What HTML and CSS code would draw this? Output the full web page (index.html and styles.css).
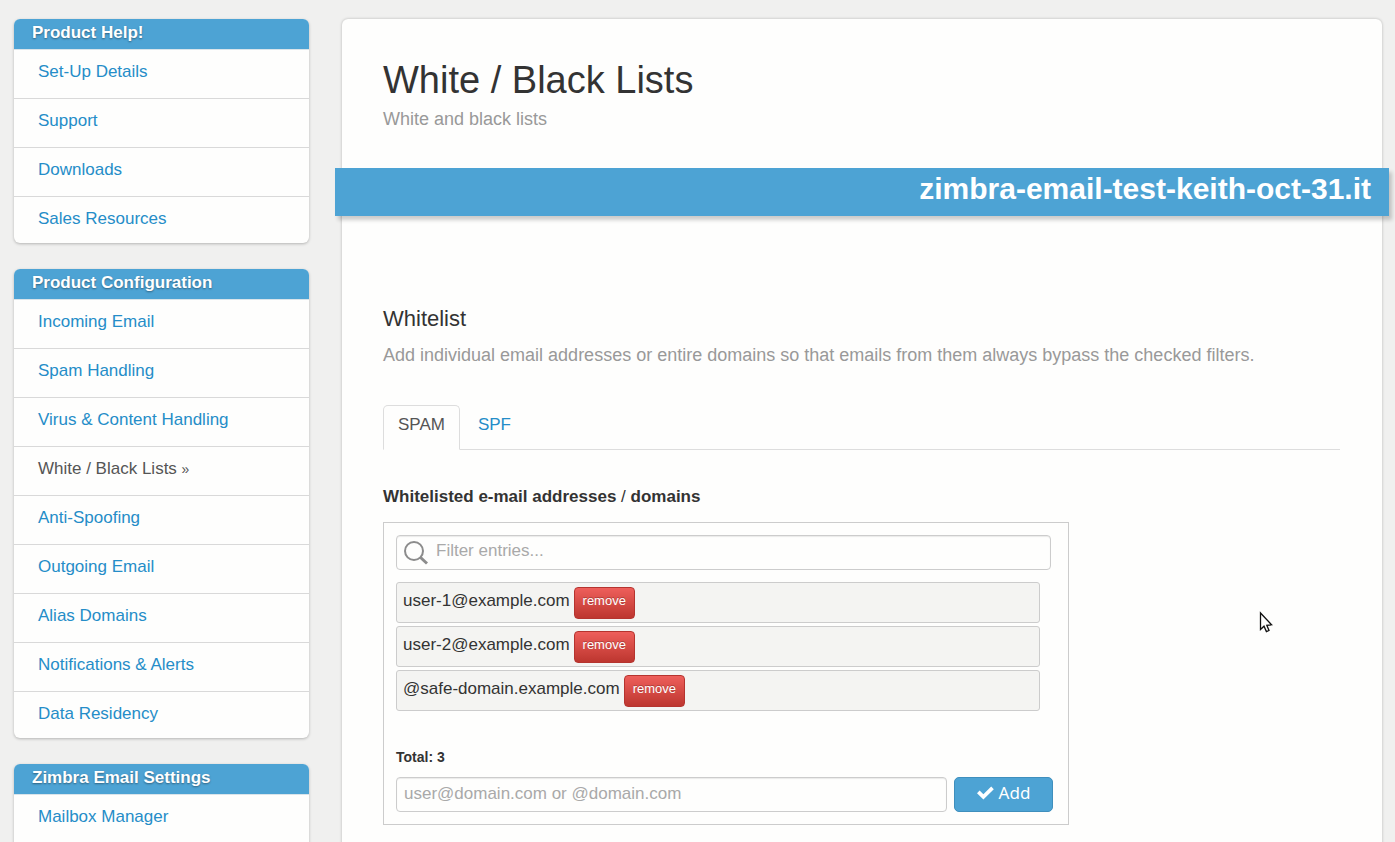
FILE: index.html
```html
<!DOCTYPE html>
<html lang="en">
<head>
    <meta charset="UTF-8">
    <meta name="viewport" content="width=device-width, initial-scale=1.0">
    <title>White / Black Lists</title>
    <link rel="stylesheet" href="styles.css">
</head>
<body>
    <div class="layout">
        <aside class="sidebar">
            <nav class="panel">
                <h2>Product Help!</h2>
                <ul>
                    <li><a href="#">Set-Up Details</a></li>
                    <li><a href="#">Support</a></li>
                    <li><a href="#">Downloads</a></li>
                    <li><a href="#">Sales Resources</a></li>
                </ul>
            </nav>

            <nav class="panel">
                <h2>Product Configuration</h2>
                <ul>
                    <li><a href="#">Incoming Email</a></li>
                    <li><a href="#">Spam Handling</a></li>
                    <li><a href="#">Virus &amp; Content Handling</a></li>
                    <li><a href="#" class="current">White / Black Lists <small>»</small></a></li>
                    <li><a href="#">Anti-Spoofing</a></li>
                    <li><a href="#">Outgoing Email</a></li>
                    <li><a href="#">Alias Domains</a></li>
                    <li><a href="#">Notifications &amp; Alerts</a></li>
                    <li><a href="#">Data Residency</a></li>
                </ul>
            </nav>

            <nav class="panel">
                <h2>Zimbra Email Settings</h2>
                <ul>
                    <li><a href="#">Mailbox Manager</a></li>
                </ul>
            </nav>
        </aside>

        <main class="content">
            <header class="page-header">
                <h1>White / Black Lists</h1>
                <p>White and black lists</p>
            </header>

            <div class="domain-bar">zimbra-email-test-keith-oct-31.it</div>

            <section class="whitelist">
                <h3>Whitelist</h3>
                <p class="lead">Add individual email addresses or entire domains so that emails from them always bypass the checked filters.</p>

                <div class="tabs">
                    <a href="#" class="tab active">SPAM</a>
                    <a href="#" class="tab">SPF</a>
                </div>

                <h4>Whitelisted e-mail addresses <span>/</span> domains</h4>

                <div class="list-box">
                    <div class="filter">
                        <svg width="26" height="26" viewBox="0 0 26 26" fill="none" stroke="#8c8c8c" aria-hidden="true">
                            <circle cx="11" cy="11" r="9" stroke-width="2"/>
                            <path d="M17 17L24 23.5" stroke-width="3"/>
                        </svg>
                        <input type="text" placeholder="Filter entries..." aria-label="Filter entries">
                    </div>

                    <ul class="entries">
                        <li><span>user-1@example.com</span><button type="button" class="btn-remove">remove</button></li>
                        <li><span>user-2@example.com</span><button type="button" class="btn-remove">remove</button></li>
                        <li><span>@safe-domain.example.com</span><button type="button" class="btn-remove">remove</button></li>
                    </ul>

                    <p class="total">Total: 3</p>

                    <form class="add-form">
                        <input type="text" placeholder="user@domain.com or @domain.com" aria-label="Address or domain">
                        <button type="submit" class="btn-add">
                            <svg width="17" height="14" viewBox="0 0 17 14" aria-hidden="true">
                                <path d="M0 7.2L2.6 4.6L6.4 8.3L14.2 0.6L16.8 3.2L6.4 13.4Z" fill="#fff"/>
                            </svg>
                            Add
                        </button>
                    </form>
                </div>
            </section>
        </main>
    </div>

    <svg class="cursor" width="16" height="24" viewBox="0 0 16 24" aria-hidden="true">
        <path d="M1.5 2V18.5L5 15.2L7.4 20.6L10 19.5L7.8 14.3L12.6 13.8Z" fill="#fff" stroke="#111" stroke-width="1.3"/>
    </svg>
</body>
</html>
```

FILE: styles.css
```css
* {
    box-sizing: border-box;
}
html {
    scrollbar-width: none;
}
body {
    margin: 0;
    background-color: #f0f0ef;
    color: #333;
    font-family: "Liberation Sans", Arial, sans-serif;
    font-size: 17px;
    line-height: 24px;
}
a {
    color: #258dc8;
    text-decoration: none;
}
ul {
    list-style: none;
    margin: 0;
    padding: 0;
}
h1, h2, h3, h4, p {
    margin: 0;
}
input, button {
    font: inherit;
}

.layout {
    display: flex;
    gap: 33px;
    min-height: 100vh;
    padding: 19px 13px 0 14px;
}

/* sidebar */
.sidebar {
    flex: 0 0 295px;
}
.panel {
    margin-bottom: 26px;
    background-color: #fefefd;
    border-radius: 6px;
    box-shadow: 0 1px 3px rgba(0, 0, 0, 0.25);
    overflow: hidden;
}
.panel:last-child {
    padding-bottom: 12px;
}
.panel h2 {
    padding: 2px 18px 4px;
    border-bottom: 1px solid #d9e4ea;
    background-color: #4da3d4;
    background-clip: padding-box;
    color: #fff;
    font-size: 17px;
    line-height: 24px;
    text-shadow: 0 1px 2px rgba(0, 0, 0, 0.4);
}
.panel li {
    border-bottom: 1px solid #d9d9d9;
}
.panel li:last-child {
    border-bottom: none;
}
.panel li a {
    display: block;
    padding: 10px 24px 14px;
}
.panel li:last-child a {
    padding-bottom: 12px;
}
.panel .current {
    color: #555;
}
.panel small {
    font-size: 14px;
}

/* main column */
.content {
    flex: 1;
    min-width: 0;
    padding: 36px 42px 18px 41px;
    background-color: #fefefd;
    border-radius: 6px 6px 0 0;
    box-shadow: 0 0 3px rgba(0, 0, 0, 0.25);
}
h1 {
    font-size: 38px;
    font-weight: normal;
    line-height: 50px;
}
.page-header p,
.lead {
    color: #999;
    font-size: 18px;
    line-height: 28px;
}
.domain-bar {
    margin: 35px -49px 0 -48px;
    padding: 3px 18px 9px;
    background-color: #4da3d4;
    box-shadow: 3px 4px 4px rgba(0, 0, 0, 0.2);
    color: #fff;
    font-size: 30px;
    font-weight: bold;
    line-height: 36px;
    text-align: right;
}
.whitelist {
    padding-top: 88px;
}
h3 {
    font-size: 22px;
    font-weight: normal;
    line-height: 30px;
    margin-bottom: 7px;
}
.tabs {
    display: flex;
    gap: 3px;
    margin: 36px 0 35px;
    border-bottom: 1px solid #ddd;
}
.tab {
    margin-bottom: -1px;
    padding: 7px 14px 12px;
    border: 1px solid transparent;
    border-radius: 5px 5px 0 0;
}
.tab.active {
    background-color: #fefefd;
    border-color: #ddd #ddd #fefefd;
    color: #555;
}
h4 {
    margin-bottom: 13px;
    font-size: 17px;
    line-height: 24px;
}
h4 span {
    font-weight: normal;
}

.list-box {
    max-width: 686px;
    padding: 12px 15px 12px 12px;
    border: 1px solid #ccc;
}
.filter,
.add-form input {
    height: 35px;
    border: 1px solid #ccc;
    border-radius: 4px;
    background-color: #fefefd;
    box-shadow: inset 0 1px 1px rgba(0, 0, 0, 0.08);
}
.filter {
    display: flex;
    align-items: center;
    gap: 7px;
    margin-right: 2px;
    padding: 0 6px;
}
.filter input {
    flex: 1;
    padding: 0 0 3px;
    border: none;
    background: none;
    outline: none;
}
input::placeholder {
    color: #a9a9a9;
}
.entries {
    display: grid;
    gap: 3px;
    margin: 12px 13px 0 0;
}
.entries li {
    display: flex;
    align-items: center;
    gap: 4px;
    height: 41px;
    padding: 0 6px;
    border: 1px solid #ccc;
    border-radius: 3px;
    background-color: #f4f4f2;
}
.entries span {
    padding-bottom: 3px;
}
.btn-remove {
    height: 32px;
    padding: 0 8px 3px;
    border: 1px solid #b5342f;
    border-radius: 4px;
    background: linear-gradient(#ee5f5b, #bd362f);
    color: #fff;
    font-size: 13px;
    text-shadow: 0 -1px 0 rgba(0, 0, 0, 0.25);
    cursor: pointer;
}
.total {
    margin: 34px 0 8px;
    font-size: 14px;
    font-weight: bold;
}
.add-form {
    display: flex;
    gap: 7px;
}
.add-form input {
    flex: 1;
    min-width: 0;
    padding: 0 8px 2px 7px;
}
.btn-add {
    display: flex;
    align-items: center;
    justify-content: center;
    gap: 5px;
    width: 99px;
    height: 35px;
    padding: 0 0 4px;
    border: 1px solid #3f8fbd;
    border-radius: 5px;
    background-color: #4da3d4;
    color: #fff;
    font-family: "Noto Sans", sans-serif;
    cursor: pointer;
}

.cursor {
    position: absolute;
    left: 1259px;
    top: 611px;
}
```
